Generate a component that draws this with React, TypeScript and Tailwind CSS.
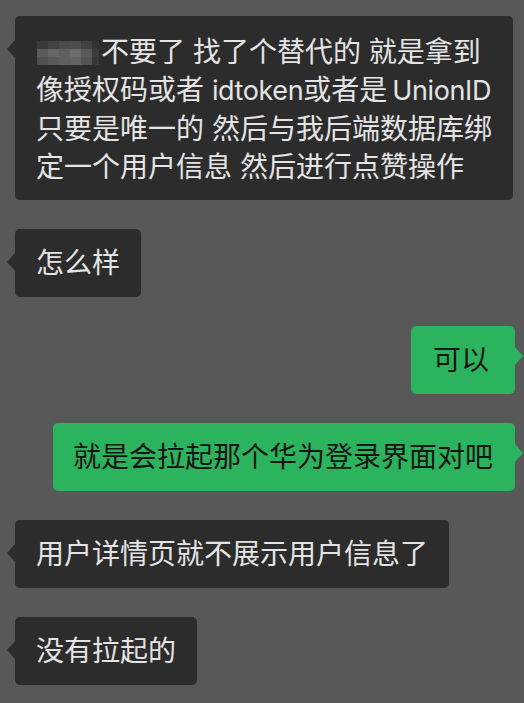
import React from 'react';

const FONT = { fontFamily: 'Inter, "Noto Sans CJK SC", sans-serif' };

// pixelated name at the start of the first message
const MOSAIC = [
  ['#3a3a3a', '#434343', '#4a4a4a', '#4d4d4d', '#414141', '#333333'],
  ['#5a5a5a', '#666666', '#5f5f5f', '#6c6c6c', '#595959', '#3c3c3c'],
  ['#505050', '#5a5a5a', '#5f5f5f', '#646464', '#545454', '#373737'],
];

const Mosaic = () => (
  <span className="inline-flex flex-col align-middle relative -top-[1px] mr-[2px] ml-[1px]">
    {MOSAIC.map((row, i) => (
      <span key={i} className="flex">
        {row.map((c, j) => (
          <span key={j} className={j === 5 ? 'w-[7px] h-[8px]' : 'w-[11px] h-[8px]'} style={{ backgroundColor: c }} />
        ))}
      </span>
    ))}
  </span>
);

const LeftBubble = ({ children, className = 'py-[15px]' }: { children: React.ReactNode; className?: string }) => (
  <div className="relative self-start ml-[15px]">
    <span className="absolute left-[-8px] top-[24px] w-0 h-0 border-y-[9px] border-y-transparent border-r-[8px] border-r-[#2c2c2c]" />
    <div className={`bg-[#2c2c2c] text-[#e4e4e4] rounded-[5px] px-[21px] text-[28px] leading-[38px] whitespace-nowrap ${className}`}>
      {children}
    </div>
  </div>
);

const RightBubble = ({ children, className = 'px-[20px]' }: { children: React.ReactNode; className?: string }) => (
  <div className="relative self-end mr-[9px]">
    <span className="absolute right-[-8px] top-[21px] w-0 h-0 border-y-[9px] border-y-transparent border-l-[8px] border-l-[#2bb35e]" />
    <div className={`bg-[#2bb35e] text-[#151515] rounded-[5px] py-[15px] text-[28px] leading-[38px] whitespace-nowrap ${className}`}>
      {children}
    </div>
  </div>
);

export default function App() {
  return (
    <div className="w-[524px] h-[703px] overflow-hidden bg-[#585858] flex flex-col gap-[29px] pt-[16px]" style={FONT}>
      <LeftBubble className="w-[498px] pt-[17px] pb-[14px]">
        <div><Mosaic />不要了 找了个替代的 就是拿到</div>
        <div>
          像授权码或者 <span className="text-[27px] tracking-[-0.4px]">idtoken</span>或者是{'\u2009'}
          <span className="text-[27px] tracking-[-0.4px]">UnionID</span>
        </div>
        <div>只要是唯一的 然后与我后端数据库绑</div>
        <div>定一个用户信息 然后进行点赞操作</div>
      </LeftBubble>
      <LeftBubble>怎么样</LeftBubble>
      <RightBubble className="w-[104px] pl-[22px]">可以</RightBubble>
      <RightBubble className="pl-[20px] pr-[22px]">就是会拉起那个华为登录界面对吧</RightBubble>
      <LeftBubble>用户详情页就不展示用户信息了</LeftBubble>
      <LeftBubble>没有拉起的</LeftBubble>
    </div>
  );
}
